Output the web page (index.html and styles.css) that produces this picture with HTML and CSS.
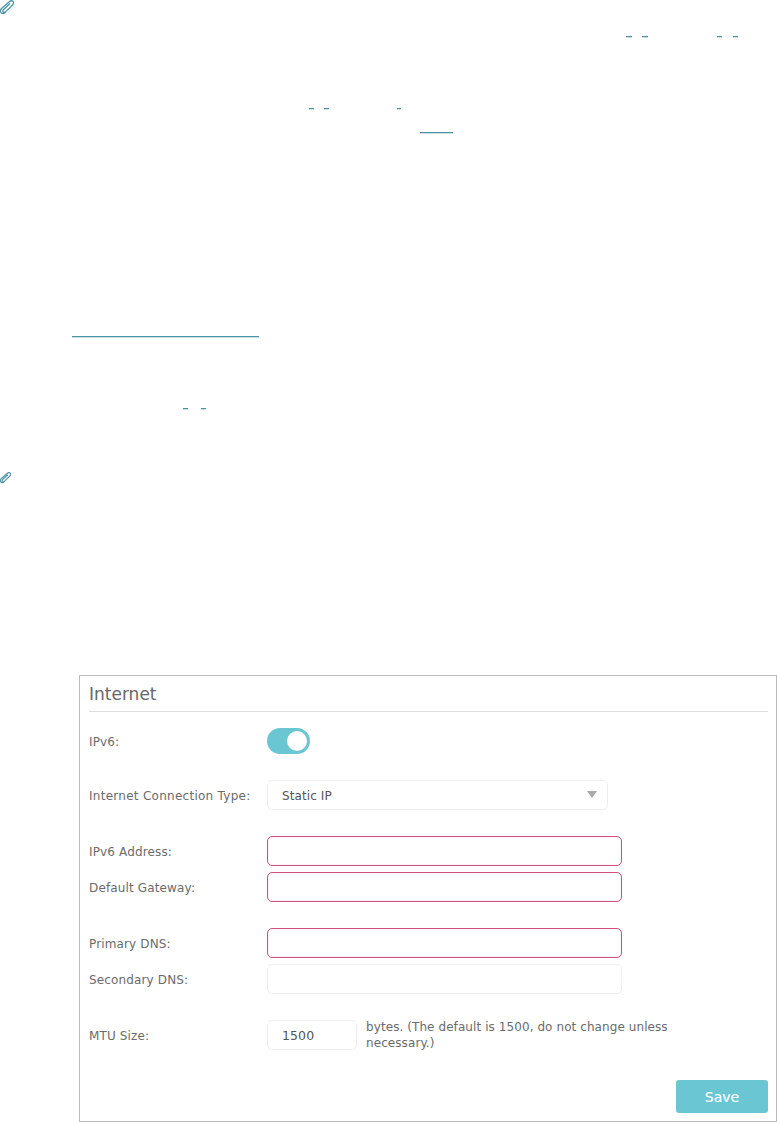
FILE: index.html
```html
<!DOCTYPE html>
<html lang="en">
<head>
<meta charset="utf-8">
<title>Internet</title>
<link rel="stylesheet" href="styles.css">
</head>
<body>
<div class="canvas">
  <svg class="clip clip-a" viewBox="0 0 14 14" aria-hidden="true"><path d="M10 3.500 3.600 9.400c-1 .9-1 2-.4 2.600.7.600 1.700.4 2.600-.4L12.300 5.200c1.400-1.400 1.600-2.900.7-3.800-1-.9-2.600-.7-4 .6L1.800 8.200c-1.500 1.500-1.600 3.500-.6 4.500 1.100 1 3 .8 4.500-.5" /></svg>
  <span class="mark m1"></span><span class="mark m2"></span><span class="mark m3"></span><span class="mark m4"></span>
  <span class="mark m5"></span><span class="mark m6"></span><span class="mark m7"></span><span class="mark m8"></span>
  <span class="mark m9"></span><span class="mark m10"></span><span class="mark m11"></span>
  <svg class="clip clip-b" viewBox="0 0 14 14" aria-hidden="true"><path d="M10 3.500 3.600 9.400c-1 .9-1 2-.4 2.600.7.600 1.700.4 2.600-.4L12.300 5.200c1.400-1.400 1.600-2.900.7-3.800-1-.9-2.600-.7-4 .6L1.800 8.200c-1.500 1.500-1.600 3.500-.6 4.500 1.100 1 3 .8 4.500-.5" /></svg>
</div>
<main class="panel">
  <h2 class="title">Internet</h2>
  <div class="row row-toggle">
    <span class="label">IPv6:</span>
    <span class="toggle"><span class="knob"></span></span>
  </div>
  <div class="row row-select">
    <span class="label label-long">Internet Connection Type:</span>
    <div class="field select"><span>Static IP</span><span class="caret"></span></div>
  </div>
  <div class="row row-group">
    <span class="label">IPv6 Address:</span>
    <div class="field wide error"></div>
  </div>
  <div class="row row-next">
    <span class="label">Default Gateway:</span>
    <div class="field wide error"></div>
  </div>
  <div class="row row-group">
    <span class="label">Primary DNS:</span>
    <div class="field wide error"></div>
  </div>
  <div class="row row-next">
    <span class="label">Secondary DNS:</span>
    <div class="field wide"></div>
  </div>
  <div class="row row-group">
    <span class="label">MTU Size:</span>
    <div class="field mtu"><span>1500</span></div>
    <p class="hint">bytes. (The default is 1500, do not change unless necessary.)</p>
  </div>
  <div class="actions"><button class="save" type="button">Save</button></div>
</main>
</body>
</html>
```
FILE: styles.css
```css
* { box-sizing: border-box; }
html, body { margin: 0; padding: 0; background: #fff; }
body { font-family: "DejaVu Sans", Verdana, sans-serif; font-size: 12px; color: #6b6b6b; }

.canvas { position: relative; height: 675px; }
.clip { position: absolute; fill: none; stroke: #4d93a6; stroke-width: 1.300; }
.clip-a { left: 0; top: 0; width: 14px; height: 14px; }
.clip-b { left: 0; top: 472px; width: 11px; height: 11px; stroke-width: 1.500; }
.mark { position: absolute; height: 1px; background: #4d93a6; box-shadow: 0 1px 0 rgba(77, 147, 166, .3); }
.m1 { left: 626px; top: 36px; width: 6px; }
.m2 { left: 642px; top: 36px; width: 6px; }
.m3 { left: 717px; top: 36px; width: 5px; }
.m4 { left: 733px; top: 36px; width: 5px; }
.m5 { left: 309px; top: 108px; width: 5px; }
.m6 { left: 324px; top: 108px; width: 5px; }
.m7 { left: 397px; top: 108px; width: 4px; }
.m8 { left: 420px; top: 132px; width: 33px; }
.m9 { left: 72px; top: 336px; width: 187px; }
.m10 { left: 183px; top: 408px; width: 5px; }
.m11 { left: 201px; top: 408px; width: 5px; }

.panel { margin-left: 79px; height: 447px; border: 1px solid #bcbcbc; padding: 0 8px 0 9px; }
.title { margin: 0; height: 36px; padding-top: 7px; font-size: 17px; font-weight: 400; line-height: 22px; color: #666; border-bottom: 1px solid #dedede; }

.row { display: flex; align-items: center; }
.label { width: 178px; flex: none; padding-top: 2px; letter-spacing: .14px; }
.label-long { letter-spacing: .27px; }
.row-toggle { margin-top: 16px; height: 26px; }
.row-select { margin-top: 26px; height: 30px; }
.row-group { margin-top: 26px; height: 30px; }
.row-next { margin-top: 6px; height: 30px; }

.toggle { display: flex; align-items: center; justify-content: flex-end; width: 43px; height: 26px; padding-right: 3px; border-radius: 13px; background: #6bc6d3; }
.knob { width: 20px; height: 20px; border-radius: 50%; background: #fff; }

.field { display: flex; align-items: center; height: 30px; padding: 1px 14px 0; border: 1px solid #eee; border-radius: 5px; background: #fff; color: #555; letter-spacing: .1px; }
.select { width: 341px; justify-content: space-between; }
.caret { width: 0; height: 0; margin: -2px -4px 0 0; border-left: 5px solid transparent; border-right: 5px solid transparent; border-top: 7px solid #a8a8a8; }
.wide { width: 355px; }
.error { border-color: #d0517f; box-shadow: inset 0 0 1px rgba(208, 81, 127, .55); }
.mtu { width: 90px; font-size: 12.500px; }
.hint { margin: 0 0 0 9px; width: 330px; line-height: 16px; letter-spacing: .08px; }

.actions { display: flex; justify-content: flex-end; margin-top: 30px; }
.save { width: 92px; height: 33px; border: 0; border-radius: 3px; background: #6bc6d3; color: #eef9fb; font: 400 14px "DejaVu Sans", Verdana, sans-serif; text-shadow: 0 0 .6px #eef9fb; }
```
